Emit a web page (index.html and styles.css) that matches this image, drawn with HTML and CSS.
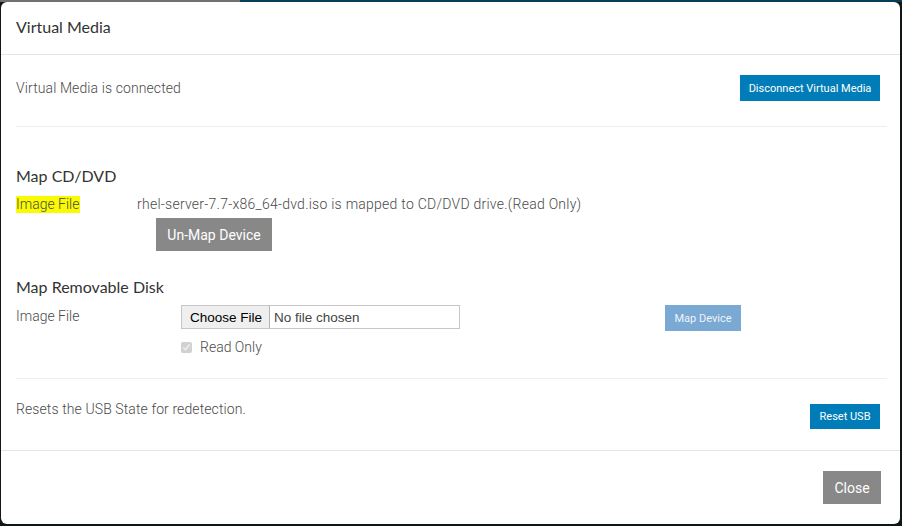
FILE: index.html
```html
<!DOCTYPE html>
<html>
<head>
<meta charset="utf-8">
<title>Virtual Media</title>
<link rel="stylesheet" href="styles.css">
</head>
<body>
<div class="backdrop-top"><span class="seg-gray"></span><span class="seg-blue"></span></div>
<div class="modal">
  <div class="modal-header">Virtual Media</div>
  <div class="modal-body">
    <div class="row row-status">
      <span class="text">Virtual Media is connected</span>
      <button class="btn btn-blue btn-disconnect">Disconnect Virtual Media</button>
    </div>
    <div class="section section-cd">
      <h3 class="section-title">Map CD/DVD</h3>
      <div class="field">
        <span class="label"><span class="hl">Image File</span></span>
        <span class="text text-wide">rhel-server-7.7-x86_64-dvd.iso is mapped to CD/DVD drive.(Read Only)</span>
      </div>
      <button class="btn btn-gray btn-unmap">Un-Map Device</button>
      <h3 class="section-title section-title-2">Map Removable Disk</h3>
      <div class="disk-grid">
        <span class="label">Image File</span>
        <div class="file-input"><span class="file-btn">Choose File</span><span class="file-text">No file chosen</span></div>
        <button class="btn btn-disabled">Map Device</button>
        <label class="check"><input type="checkbox" checked disabled><span>Read Only</span></label>
      </div>
    </div>
    <div class="row row-usb">
      <span class="text">Resets the USB State for redetection.</span>
      <button class="btn btn-blue btn-reset">Reset USB</button>
    </div>
  </div>
  <div class="modal-footer">
    <button class="btn btn-gray btn-close">Close</button>
  </div>
</div>
</body>
</html>
```

FILE: styles.css
```css
html, body {
  margin: 0;
  padding: 0;
}
body {
  width: 902px;
  height: 526px;
  background: #101812;
  overflow: hidden;
  font-family: Roboto, "Liberation Sans", sans-serif;
}
.backdrop-top {
  display: flex;
  height: 2px;
}
.seg-gray {
  width: 240px;
  background: #707070;
}
.seg-blue {
  flex: 1;
  background: #0b3c57;
}
.modal {
  margin-left: 1px;
  width: 899px;
  height: 522px;
  background: #fff;
  border-radius: 6px;
  box-sizing: border-box;
  display: flex;
  flex-direction: column;
}
.modal-header {
  height: 53px;
  box-sizing: border-box;
  padding: 15px 15px 0;
  font-family: Lato, "Open Sans", sans-serif;
  font-size: 16px;
  line-height: 20px;
  color: #333;
  border-bottom: 1px solid #e5e5e5;
}
.modal-body {
  padding: 0 13px 0 15px;
  flex: 1;
}
.row {
  display: flex;
  justify-content: space-between;
}
.row-status {
  align-items: center;
  padding-top: 20px;
  padding-bottom: 25px;
  padding-right: 7px;
  border-bottom: 1px solid #eee;
}
.text {
  font-size: 14px;
  font-weight: 300;
  color: #4a4a4a;
  line-height: 16px;
  letter-spacing: 0.1px;
}
.text-wide {
  letter-spacing: 0.25px;
}
.btn {
  border: none;
  font-family: Roboto, "Liberation Sans", sans-serif;
  color: #fff;
  cursor: pointer;
  padding: 0;
  border-radius: 0;
}
.btn-blue {
  background: #007db8;
  font-size: 11px;
  height: 25px;
}
.btn-disconnect {
  width: 140px;
  height: 26px;
}
.btn-reset {
  width: 70px;
  margin-top: 3px;
}
.btn-gray {
  background: #888;
  font-size: 14px;
  height: 33px;
}
.btn-unmap {
  margin-left: 140px;
  margin-top: 6px;
  width: 116px;
  display: block;
}
.btn-disabled {
  background: #7aa9d3;
  color: #eef4fa;
  font-size: 11px;
  height: 26px;
  width: 76px;
  align-self: start;
  margin-left: -1px;
}
.section-cd {
  padding-top: 39px;
  padding-bottom: 23px;
  border-bottom: 1px solid #eee;
}
.section-title {
  margin: 0;
  font-family: Lato, "Open Sans", sans-serif;
  font-weight: 400;
  font-size: 16px;
  line-height: 20px;
  color: #333;
}
.section-title-2 {
  margin-top: 26px;
}
.field {
  display: flex;
  align-items: center;
  margin-top: 10px;
}
.label {
  width: 121px;
  flex: none;
  font-size: 14px;
  font-weight: 300;
  color: #4a4a4a;
  line-height: 16px;
}
.hl {
  background: #fbfb00;
  padding: 0 1px 1px 0;
}
.disk-grid {
  display: grid;
  grid-template-columns: 165px 485px 76px;
  align-items: center;
  margin-top: 8px;
  row-gap: 8px;
}
.disk-grid .label {
  align-self: start;
  margin-top: 3px;
}
.file-input {
  width: 279px;
  height: 24px;
  box-sizing: border-box;
  border: 1px solid #c6c6c6;
  display: flex;
  align-items: center;
  font-family: Arial, "Liberation Sans", sans-serif;
  font-size: 13.5px;
  align-self: start;
}
.file-btn {
  height: 100%;
  box-sizing: border-box;
  padding: 0 7px 0 8px;
  display: flex;
  align-items: center;
  background: #efefef;
  border-right: 1px solid #b4b4b4;
  color: #000;
}
.file-text {
  padding-left: 4px;
  color: #444;
}
.check {
  grid-column: 2;
  display: flex;
  align-items: center;
  font-size: 14px;
  font-weight: 300;
  color: #4a4a4a;
}
.check input {
  margin: 0 8px 0 0;
  width: 11px;
  height: 11px;
}
.row-usb {
  align-items: flex-start;
  padding-top: 22px;
  padding-right: 7px;
}
.modal-footer {
  height: 74px;
  box-sizing: border-box;
  border-top: 1px solid #e5e5e5;
  display: flex;
  justify-content: flex-end;
  align-items: flex-start;
  padding: 20px 19px 0 0;
}
.btn-close {
  width: 58px;
  font-size: 14px;
}
```
